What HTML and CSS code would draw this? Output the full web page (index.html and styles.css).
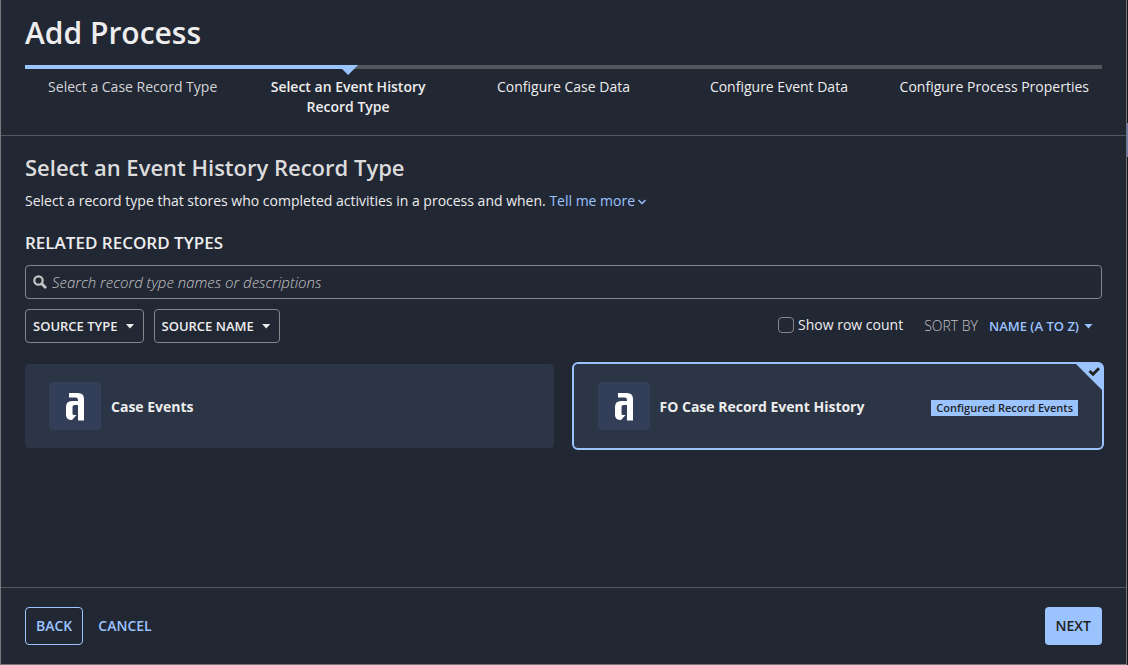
FILE: index.html
```html
<!DOCTYPE html>
<html lang="en">
<head>
<meta charset="utf-8">
<title>Add Process</title>
<link rel="stylesheet" href="styles.css">
</head>
<body>
<main class="dialog">
  <header class="dialog-header">
    <h1 class="title">Add Process</h1>
    <ol class="steps">
      <li class="step done">Select a Case Record Type</li>
      <li class="step current" aria-current="step">Select an Event History Record Type</li>
      <li class="step">Configure Case Data</li>
      <li class="step">Configure Event Data</li>
      <li class="step">Configure Process Properties</li>
    </ol>
  </header>

  <section class="content">
    <h2 class="heading">Select an Event History Record Type</h2>
    <p class="intro">Select a record type that stores who completed activities in a process and when.
      <a class="more" href="#more">Tell me more<svg class="chevron" width="8" height="6" viewBox="0 0 8 6" aria-hidden="true"><path d="M.5 1L4 4.500 7.500 1" fill="none" stroke="currentColor" stroke-width="1.400"/></svg></a></p>
    <h3 class="subheading">RELATED RECORD TYPES</h3>

    <div class="search">
      <svg width="14" height="14" viewBox="0 0 14 14" aria-hidden="true"><circle cx="5.5" cy="5.5" r="4.2" fill="none" stroke="currentColor" stroke-width="2.2"/><path d="M8.8 8.8l3.4 3.4" stroke="currentColor" stroke-width="2.8" stroke-linecap="round"/></svg>
      <input class="search-input" type="text" aria-label="Search record types" placeholder="Search record type names or descriptions">
    </div>

    <div class="toolbar">
      <button class="filter" type="button">SOURCE TYPE<span class="caret"></span></button>
      <button class="filter" type="button">SOURCE NAME<span class="caret"></span></button>
      <div class="options">
        <label class="check" for="rows"><input class="check-box" id="rows" type="checkbox">Show row count</label>
        <div class="sort">
          <span class="sort-label">SORT BY</span>
          <button class="sort-button" type="button">NAME (A TO Z)<span class="caret"></span></button>
        </div>
      </div>
    </div>

    <div class="cards">
      <button class="card" type="button" aria-pressed="false">
        <span class="logo"><svg width="20" height="30" viewBox="0 0 20 30" aria-hidden="true"><path fill="#fff" d="M4 2H13Q19 2 19 8V29.500H13V14H9.500Q7.500 14 7.500 16V22.500Q7.500 24 9 24H11.500L7 29Q1 29 1 24V16Q1 10 7 10H13V9Q13 6.500 11 6.500H4Z"/></svg></span>
        <span class="card-name">Case Events</span>
      </button>
      <button class="card selected" type="button" aria-pressed="true">
        <span class="logo"><svg width="20" height="30" viewBox="0 0 20 30" aria-hidden="true"><path fill="#fff" d="M4 2H13Q19 2 19 8V29.500H13V14H9.500Q7.500 14 7.500 16V22.500Q7.500 24 9 24H11.500L7 29Q1 29 1 24V16Q1 10 7 10H13V9Q13 6.500 11 6.500H4Z"/></svg></span>
        <span class="card-name">FO Case Record Event History</span>
        <span class="tag">Configured Record Events</span>
        <svg class="corner" width="26" height="26" viewBox="0 0 26 26" aria-hidden="true"><path d="M0 0H26V26Z" fill="#9bc4ff"/><path d="M13.500 7l3.500 3.200 6-6" fill="none" stroke="#222" stroke-width="2.800"/></svg>
      </button>
    </div>
  </section>

  <footer class="dialog-footer">
    <button class="button outline" type="button">BACK</button>
    <button class="button link" type="button">CANCEL</button>
    <button class="button solid" type="button">NEXT</button>
  </footer>
</main>
</body>
</html>
```

FILE: styles.css
```css
* {
  box-sizing: border-box;
}

body {
  margin: 0;
  padding-right: 1px;
  background: linear-gradient(#15171d 123px, #6d7cae 123px 157px, #15171d 157px);
  color: #ededed;
  font: 14px/20px "Open Sans", sans-serif;
}

button,
input {
  margin: 0;
  font: inherit;
  color: inherit;
}

h1,
h2,
h3,
p,
ol {
  margin: 0;
  padding: 0;
}

.dialog {
  display: flex;
  flex-direction: column;
  min-height: 100vh;
  background: #222734;
  border: solid #77797d;
  border-width: 0 1px 1px;
}

.dialog-header {
  padding: 13px 24px 18px;
  border-bottom: 1px solid #54565e;
}

.title {
  font-size: 30px;
  line-height: 40px;
  font-weight: 600;
}

.steps {
  display: grid;
  grid-template-columns: repeat(5, 1fr);
  margin-top: 12px;
  list-style: none;
}

.step {
  position: relative;
  padding: 8px 10px 0;
  border-top: 4px solid #54565e;
  text-align: center;
}

.step.done {
  border-color: #9bc4ff;
  color: #d4d4d5;
}

.step.current {
  font-weight: 600;
}

.step.current::before {
  content: "";
  position: absolute;
  top: -4px;
  left: -2px;
  width: calc(50% + 12px);
  height: 10px;
  background: #9bc4ff;
  clip-path: polygon(0 0, 100% 0, calc(100% - 10px) 100%, calc(100% - 16px) 4px, 0 4px);
}

.content {
  flex: 1;
  padding: 16px 24px;
}

.heading {
  color: #dcdcdc;
  font-size: 22px;
  line-height: 30px;
  font-weight: 600;
}

.intro {
  margin-top: 9px;
  font-weight: 500;
}

.more {
  color: #9bc4ff;
  text-decoration: none;
}

.chevron {
  margin: 0 0 1px 3px;
}

.subheading {
  margin-top: 20px;
  font-size: 17px;
  line-height: 24px;
  font-weight: 600;
}

.search {
  display: flex;
  align-items: center;
  gap: 5px;
  height: 34px;
  margin-top: 10px;
  padding: 0 7px;
  border: 1px solid #85868a;
  border-radius: 4px;
  color: #c4c4c4;
}

.search-input {
  flex: 1;
  padding: 0;
  border: 0;
  outline: 0;
  background: none;
  font-size: 15px;
}

.search-input::placeholder {
  color: #c4c4c4;
  font-style: italic;
  font-weight: 300;
  opacity: 1;
}

.toolbar {
  display: flex;
  gap: 10px;
  margin-top: 10px;
}

.filter {
  display: flex;
  align-items: center;
  gap: 8px;
  height: 34px;
  padding: 0 8px 0 7px;
  border: 1px solid #85868a;
  border-radius: 4px;
  background: none;
  font-size: 13px;
  font-weight: 600;
}

.caret {
  width: 9px;
  height: 5px;
  background: currentColor;
  clip-path: polygon(0 0, 100% 0, 50% 100%);
}

.options {
  display: flex;
  align-items: center;
  gap: 21px;
  margin-left: auto;
  padding-right: 9px;
}

.check {
  display: flex;
  align-items: center;
  gap: 4px;
  padding-bottom: 2px;
  font-weight: 500;
}

.check-box {
  appearance: none;
  width: 16px;
  height: 16px;
  border: 1px solid #85868a;
  border-radius: 4px;
}

.sort {
  display: flex;
  align-items: center;
  gap: 11px;
}

.sort-label {
  color: #c4c4c4;
  font-weight: 300;
}

.sort-button {
  display: flex;
  align-items: center;
  gap: 5px;
  padding: 0;
  border: 0;
  background: none;
  color: #9bc4ff;
  font-size: 13px;
  font-weight: 600;
}

.cards {
  display: grid;
  grid-template-columns: 1fr 1fr;
  gap: 20px;
  margin-top: 21px;
}

.card {
  position: relative;
  display: flex;
  align-items: center;
  gap: 10px;
  padding: 18px 24px;
  border: 0;
  border-radius: 4px;
  background: #2c3545;
  text-align: left;
}

.card.selected {
  outline: 2px solid #9bc4ff;
}

.logo {
  display: flex;
  align-items: center;
  justify-content: center;
  width: 52px;
  height: 48px;
  border-radius: 4px;
  background: #333f58;
}

.card-name {
  flex: 1;
  padding-top: 2px;
  font-weight: 700;
}

.tag {
  margin-top: 4px;
  padding: 0 5px;
  background: #9bc4ff;
  color: #222;
  font-size: 11px;
  line-height: 16px;
  font-weight: 600;
}

.corner {
  position: absolute;
  top: 0;
  right: 0;
}

.dialog-footer {
  display: flex;
  gap: 4px;
  padding: 19px 24px;
  border-top: 1px solid #54565e;
}

.button {
  height: 38px;
  padding: 0 10px;
  border: 1px solid transparent;
  border-radius: 4px;
  background: none;
  color: #9bc4ff;
  font-weight: 600;
}

.button.outline {
  border-color: #9bc4ff;
}

.button.solid {
  margin-left: auto;
  background: #9bc4ff;
  color: #222;
}
```
